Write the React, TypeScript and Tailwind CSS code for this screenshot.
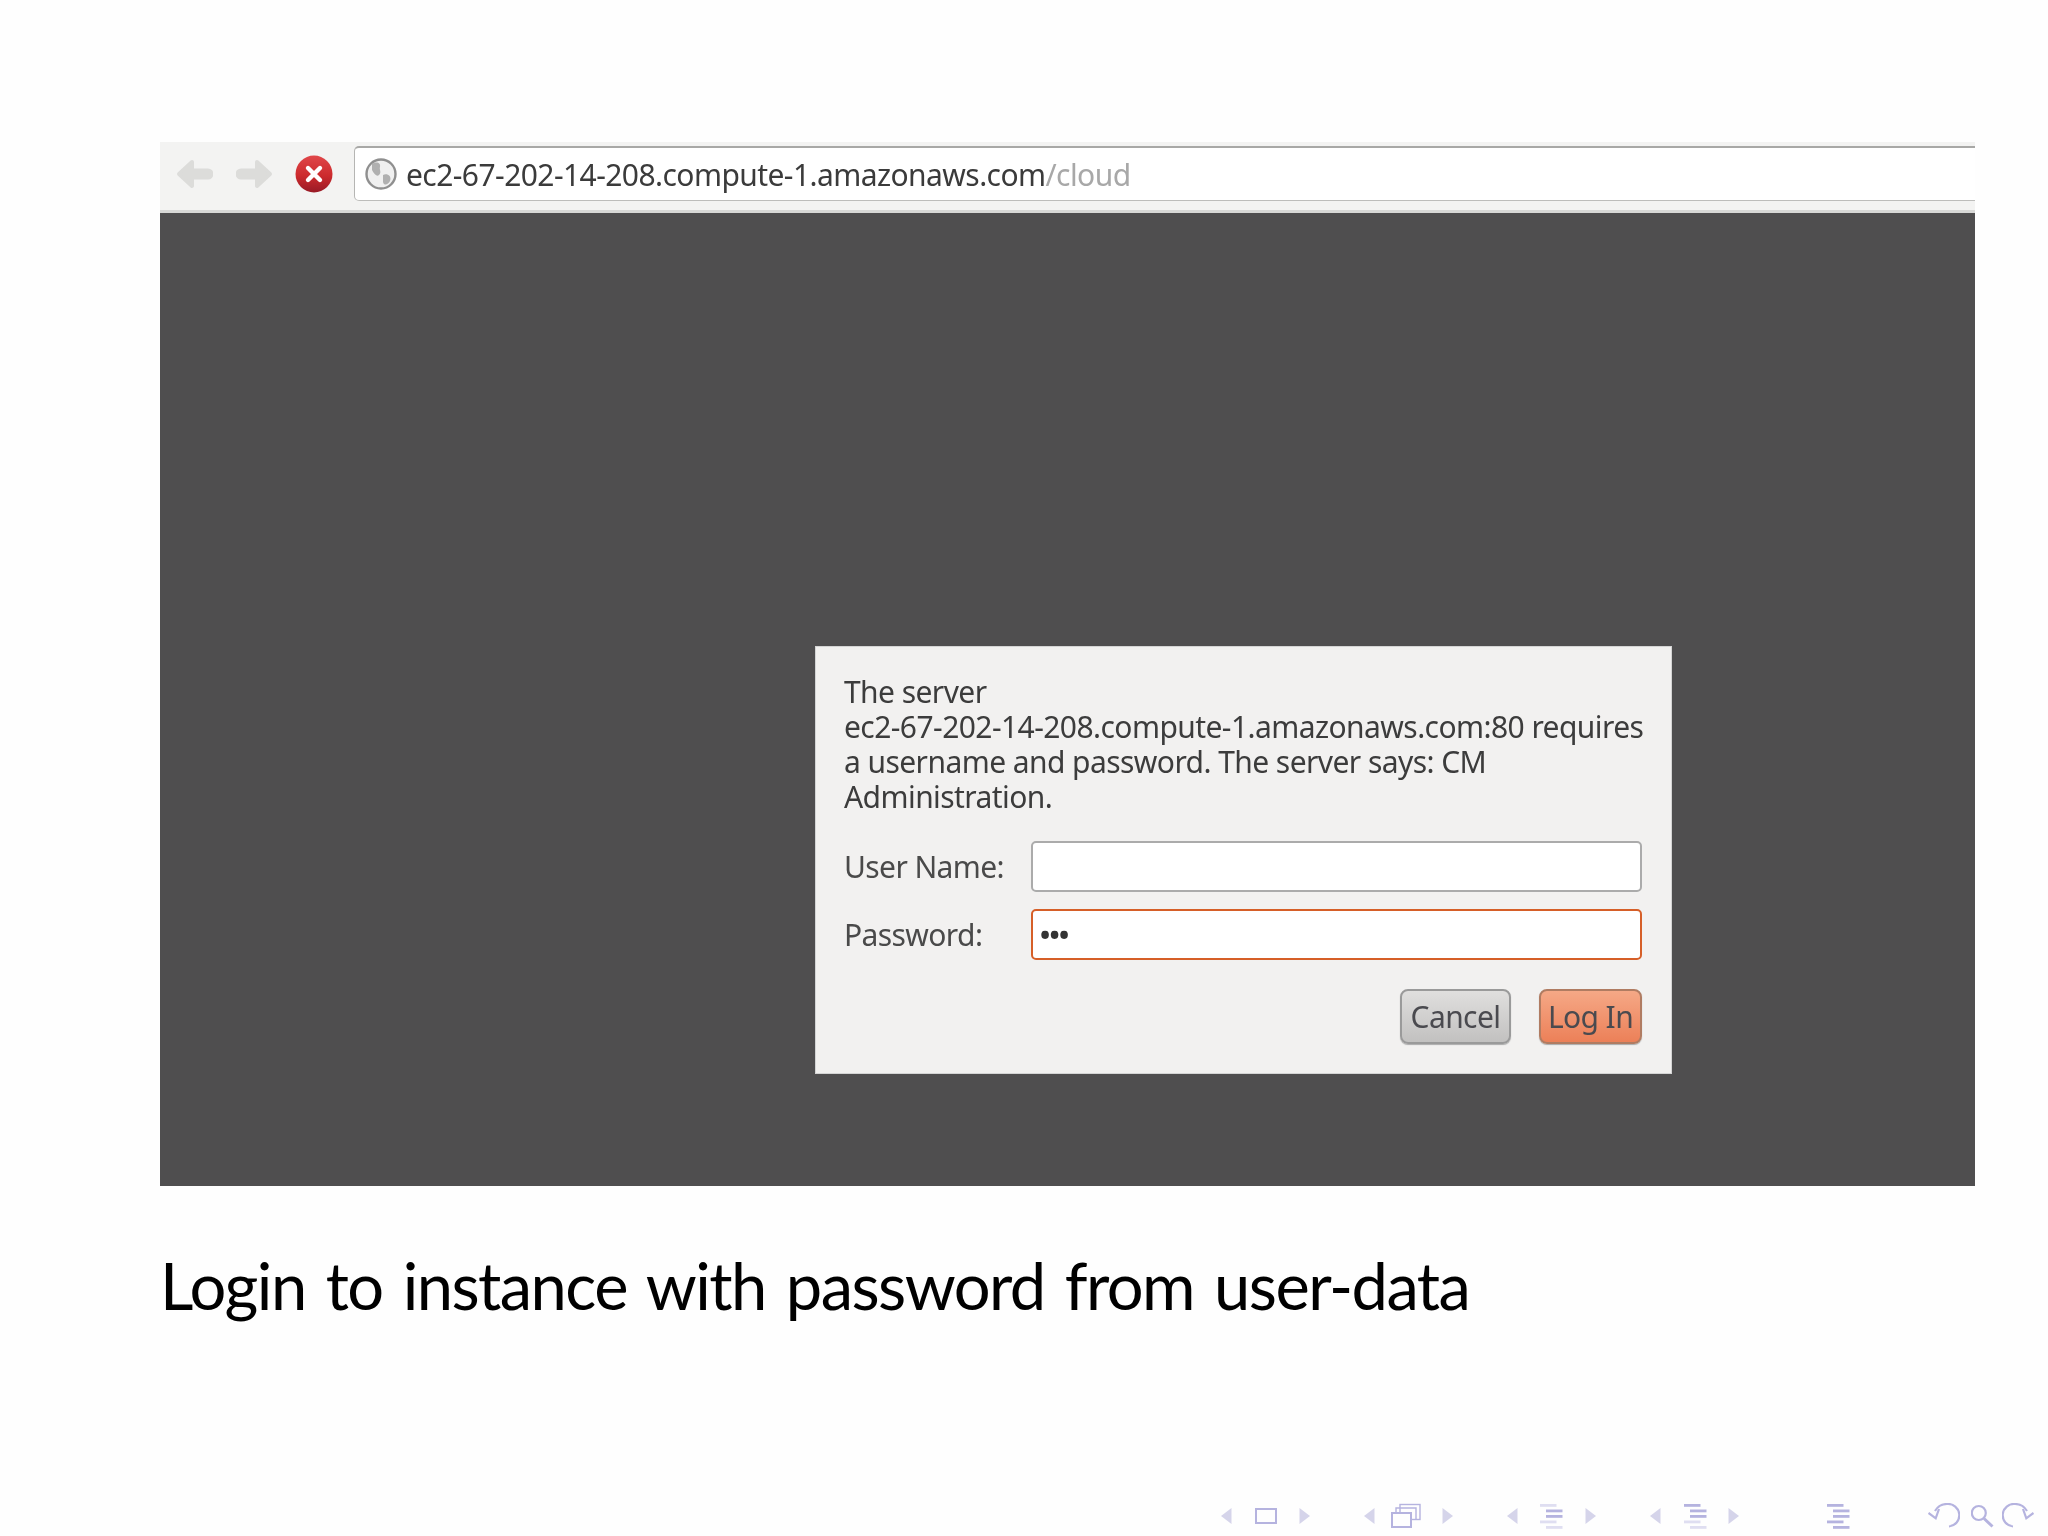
const ui = { fontFamily: '"Noto Sans", sans-serif' };

function Tri({ dir }: { dir: "l" | "r" }) {
  return (
    <svg width="12" height="26" viewBox="0 0 12 26" className="shrink-0">
      <path d={dir === "l" ? "M11.5 5 L1 13 L11.5 21 Z" : "M0.5 5 L11 13 L0.5 21 Z"} fill="#d5d4ea" />
    </svg>
  );
}

function Lines({ shades }: { shades: string[] }) {
  const rows: [number, number][] = [
    [1, 0],
    [6.5, 6],
    [12, 6],
    [17.5, 0],
    [23, 6],
  ];
  return (
    <svg width="23" height="26" viewBox="0 0 23 26" className="shrink-0">
      {rows.map(([y, x], i) => (
        <rect key={i} x={x} y={y} width="16.5" height="2.8" fill={shades[i]} />
      ))}
    </svg>
  );
}

function Loop({ flip }: { flip?: boolean }) {
  const c = "#b5b3df";
  return (
    <svg width="32" height="26" viewBox="0 0 32 26" className={flip ? "shrink-0 -scale-x-100" : "shrink-0"}>
      <path d="M7 8 C10 3 15 1 19 1 A11 11 0 0 1 21 23.5" fill="none" stroke={c} strokeWidth="2.2" />
      <path d="M0.5 10 L7.7 15.3 L11 6" fill="none" stroke={c} strokeWidth="2.2" />
    </svg>
  );
}

function Nav() {
  const c = "#b5b3df";
  const pale = "#dfdef1";
  return (
    <div className="flex items-start h-[26px] pl-[1060px]">
      <Tri dir="l" />
      <svg width="22" height="26" viewBox="0 0 22 26" className="ml-[23px] shrink-0">
        <rect x="1" y="6" width="20" height="14" fill="none" stroke={c} strokeWidth="2" />
      </svg>
      <div className="ml-[22px]"><Tri dir="r" /></div>
      <div className="ml-[52px]"><Tri dir="l" /></div>
      <svg width="30" height="26" viewBox="0 0 30 26" className="ml-[16px] shrink-0">
        <rect x="9" y="1.5" width="20" height="15" fill="none" stroke={c} strokeWidth="1.4" />
        <path d="M5 18 L5 5 L25 5 L25 16" fill="none" stroke={c} strokeWidth="1.4" />
        <rect x="1" y="10" width="19" height="14" fill="#fefefe" stroke={c} strokeWidth="2" />
      </svg>
      <div className="ml-[21px]"><Tri dir="r" /></div>
      <div className="ml-[52px]"><Tri dir="l" /></div>
      <div className="ml-[22px]"><Lines shades={[pale, c, c, pale, pale]} /></div>
      <div className="ml-[22px]"><Tri dir="r" /></div>
      <div className="ml-[52px]"><Tri dir="l" /></div>
      <div className="ml-[23px]"><Lines shades={[c, c, c, pale, pale]} /></div>
      <div className="ml-[21px]"><Tri dir="r" /></div>
      <div className="ml-[87px]"><Lines shades={[c, c, c, c, c]} /></div>
      <div className="ml-[78px]"><Loop /></div>
      <svg width="23" height="26" viewBox="0 0 23 26" className="ml-[11px] shrink-0">
        <circle cx="7.8" cy="10" r="7" fill="none" stroke={c} strokeWidth="2.2" />
        <path d="M13 15.5 L21.5 23.5" stroke={c} strokeWidth="3" />
      </svg>
      <div className="ml-[8px]"><Loop flip /></div>
    </div>
  );
}

function Arrow({ flip }: { flip?: boolean }) {
  return (
    <svg width="37" height="30" viewBox="0 0 37 30" className={flip ? "shrink-0 -scale-x-100" : "shrink-0"}>
      <path d="M16 3 L3 15 L16 27 Z" fill="#dcdcda" stroke="#dcdcda" strokeWidth="4" strokeLinejoin="round" />
      <path d="M12 15 L32 15" stroke="#dcdcda" strokeWidth="11" strokeLinecap="round" />
    </svg>
  );
}

function Chrome() {
  return (
    <div className="flex items-start h-[71px] bg-[#f3f3f2] border-b-[3px] border-[#d8d8d6] pl-[16px] pt-[4px]" style={ui}>
      <div className="mt-[13px]"><Arrow /></div>
      <div className="mt-[13px] ml-[23px]"><Arrow flip /></div>
      <svg width="38" height="38" viewBox="0 0 38 38" className="shrink-0 mt-[9px] ml-[22px]">
        <defs>
          <linearGradient id="stop" x1="0" y1="0" x2="0" y2="1">
            <stop offset="0" stopColor="#e0474a" />
            <stop offset="0.55" stopColor="#cc2a2d" />
            <stop offset="1" stopColor="#981a26" />
          </linearGradient>
        </defs>
        <circle cx="19" cy="19" r="18.5" fill="url(#stop)" />
        <path d="M13 13 L25 25 M25 13 L13 25" stroke="#fff" strokeWidth="4.4" strokeLinecap="round" />
      </svg>
      <div className="flex items-center ml-[21px] flex-1 h-[55px] bg-white rounded-l-[5px] border-l border-b border-t-2 border-l-[#b5b5b3] border-b-[#bdbdbb] border-t-[#a8a8a6] pl-[10px]">
        <svg width="32" height="32" viewBox="0 0 32 32" className="shrink-0">
          <circle cx="16" cy="16" r="14.5" fill="#f0f0f0" stroke="#8f8f8f" strokeWidth="2.4" />
          <path d="M7 6 C12 3 16 5 15 9 C14 12 17 14 14 17 C12 19 9 16 7 12 Z" fill="#b0b0b0" />
          <path d="M18 17 C22 15 27 18 25 23 C23 27 19 28 18 24 Z" fill="#b0b0b0" />
        </svg>
        <span className="ml-[9px] pt-[2px] text-[30px] leading-none tracking-[-0.57px] text-[#3b3b3b] whitespace-nowrap">
          ec2-67-202-14-208.compute-1.amazonaws.com<span className="text-[#a8a8a8]">/cloud</span>
        </span>
      </div>
    </div>
  );
}

function Field({ label, focus }: { label: string; focus?: boolean }) {
  return (
    <div className="flex items-center">
      <span className="w-[187px] text-[30px] text-[#4a4a4a] tracking-[-0.6px]">{label}</span>
      <div
        className={
          focus
            ? "flex items-center w-[611px] h-[51px] bg-white rounded-[5px] border-2 border-[#d65f28] pl-[7px]"
            : "w-[611px] h-[51px] bg-white rounded-[5px] border-2 border-[#ababab]"
        }
      >
        {focus && <span className="text-[27px] font-bold leading-none tracking-[-0.6px] text-[#333]">•••</span>}
      </div>
    </div>
  );
}

function Dialog() {
  return (
    <div className="w-[857px] h-[428px] bg-[#f2f1f0] border border-[#d4d4d4] pl-[28px] pr-[29px] pt-[27px]" style={ui}>
      <p className="text-[30px] leading-[35px] tracking-[-0.57px] text-[#3c3c3c] w-[810px] whitespace-nowrap">
        The server
        <br />
        ec2-67-202-14-208.compute-1.amazonaws.com:80 requires
        <br />
        a username and password. The server says: CM
        <br />
        Administration.
      </p>
      <div className="flex flex-col gap-[17px] mt-[27px]">
        <Field label="User Name:" />
        <Field label="Password:" focus />
      </div>
      <div className="flex justify-end gap-[28px] mt-[29px] text-[30px] tracking-[-0.6px] leading-none">
        <button className="w-[111px] h-[55px] rounded-[8px] border-2 border-[#9a9a9a] bg-linear-to-b from-[#e0dfde] to-[#c2c1c0] text-[#4a4a4f] shadow-[0_1px_1px_#aaa]">
          Cancel
        </button>
        <button className="w-[103px] h-[55px] rounded-[8px] border-2 border-[#b07c62] bg-linear-to-b from-[#f5a886] to-[#ec8058] text-[#4a4a4f] shadow-[0_1px_1px_#aaa]">
          Log In
        </button>
      </div>
    </div>
  );
}

export default function App() {
  return (
    <div className="w-[2048px] h-[1536px] bg-[#fefefe] pt-[142px] pl-[160px] overflow-hidden">
      <div className="w-[1815px] blur-[0.5px]">
        <Chrome />
        <div className="h-[973px] bg-[#4f4e4f] pl-[655px] pt-[433px]">
          <Dialog />
        </div>
      </div>
      <h1
        className="mt-[59px] text-[65px] leading-[80px] font-normal tracking-[-1.55px] [word-spacing:5px] text-black whitespace-nowrap"
        style={{ fontFamily: "Lato, sans-serif" }}
      >
        Login to instance with password from user-data
      </h1>
      <div className="mt-[178px]">
        <Nav />
      </div>
    </div>
  );
}
